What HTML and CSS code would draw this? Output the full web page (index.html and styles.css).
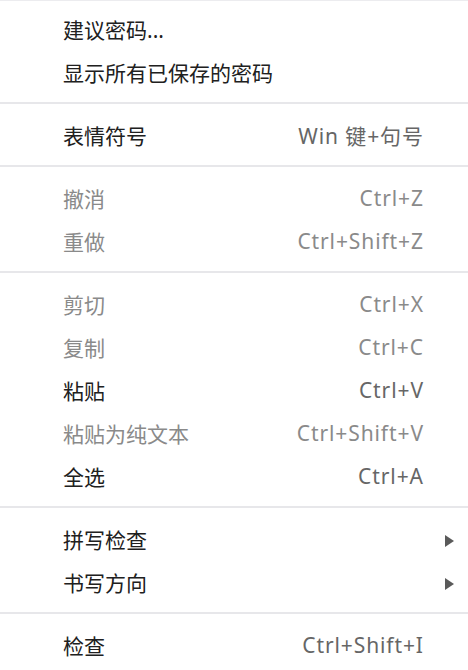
FILE: index.html
```html
<!DOCTYPE html>
<html lang="zh-CN">
<head>
<meta charset="utf-8">
<title>上下文菜单</title>
<link rel="stylesheet" href="styles.css">
</head>
<body>
<div class="menu">
  <div class="item"><span class="label">建议密码...</span><span class="key"></span><span class="sub"></span></div>
  <div class="item"><span class="label">显示所有已保存的密码</span><span class="key"></span><span class="sub"></span></div>
  <div class="sep"></div>
  <div class="item"><span class="label">表情符号</span><span class="key">Win 键+句号</span><span class="sub"></span></div>
  <div class="sep"></div>
  <div class="item disabled"><span class="label">撤消</span><span class="key">Ctrl+Z</span><span class="sub"></span></div>
  <div class="item disabled"><span class="label">重做</span><span class="key">Ctrl+Shift+Z</span><span class="sub"></span></div>
  <div class="sep"></div>
  <div class="item disabled"><span class="label">剪切</span><span class="key">Ctrl+X</span><span class="sub"></span></div>
  <div class="item disabled"><span class="label">复制</span><span class="key">Ctrl+C</span><span class="sub"></span></div>
  <div class="item"><span class="label">粘贴</span><span class="key">Ctrl+V</span><span class="sub"></span></div>
  <div class="item disabled"><span class="label">粘贴为纯文本</span><span class="key">Ctrl+Shift+V</span><span class="sub"></span></div>
  <div class="item"><span class="label">全选</span><span class="key">Ctrl+A</span><span class="sub"></span></div>
  <div class="sep"></div>
  <div class="item"><span class="label">拼写检查</span><span class="key"></span><span class="sub"><svg class="arrow" width="9" height="12" viewBox="0 0 9 12"><path d="M0 0 L9 6 L0 12 Z"/></svg></span></div>
  <div class="item"><span class="label">书写方向</span><span class="key"></span><span class="sub"><svg class="arrow" width="9" height="12" viewBox="0 0 9 12"><path d="M0 0 L9 6 L0 12 Z"/></svg></span></div>
  <div class="sep"></div>
  <div class="item"><span class="label">检查</span><span class="key">Ctrl+Shift+I</span><span class="sub"></span></div>
</div>
</body>
</html>
```

FILE: styles.css
```css
html, body {
  margin: 0;
  padding: 0;
  background: #ffffff;
}

.menu {
  width: 468px;
  border-top: 1px solid #ececef;
  padding-top: 8px;
  font-family: "Noto Sans", "Noto Sans CJK SC", sans-serif;
  font-size: 21px;
  color: #202020;
}

.item {
  display: grid;
  grid-template-columns: 1fr auto 45px;
  align-items: center;
  box-sizing: border-box;
  height: 43px;
  padding: 0 0 4px 63px;
}

.label {
  white-space: nowrap;
}

.key {
  white-space: nowrap;
  color: #666666;
  letter-spacing: 0.9px;
  margin-right: -0.9px;
}

.sub {
  display: flex;
  justify-content: flex-end;
  padding: 4px 14px 0 0;
}

.arrow {
  display: block;
  fill: #5a5a5a;
}

.disabled .label,
.disabled .key {
  color: #8a8a8a;
}

.sep {
  height: 2px;
  background: #e7e7ea;
  margin: 7px 0 11px;
}
```
